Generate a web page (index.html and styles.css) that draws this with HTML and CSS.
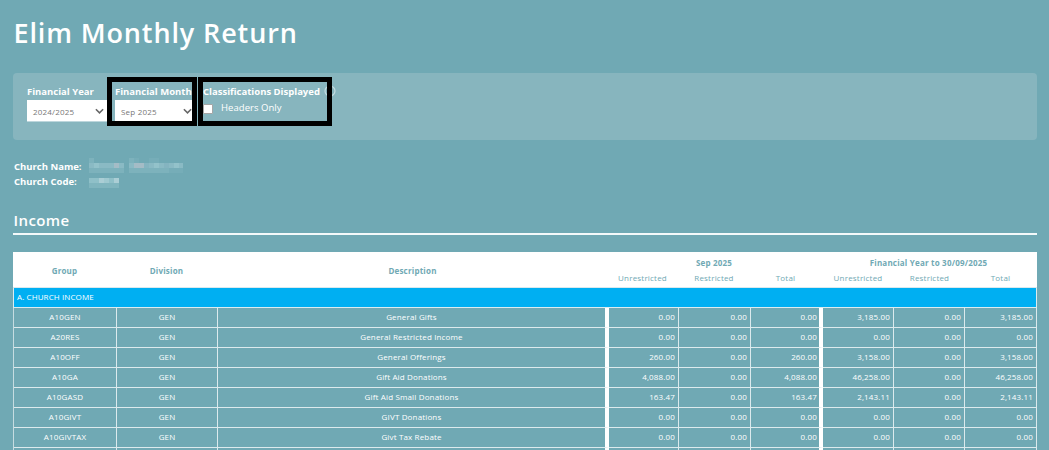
FILE: index.html
```html
<!DOCTYPE html>
<html lang="en">
<head>
<meta charset="utf-8">
<title>Elim Monthly Return</title>
<link rel="stylesheet" href="styles.css">
</head>
<body>
<main class="page">
  <h1 class="title">Elim Monthly Return</h1>
  <section class="filters">
    <div class="field">
      <div class="label">Financial Year</div>
      <div class="select"><span>2024/2025</span><svg class="chevron" viewBox="0 0 8 6"><path d="M0.8 1 L4 4.2 L7.2 1"/></svg></div>
    </div>
    <div class="field">
      <div class="label">Financial Month</div>
      <div class="select"><span>Sep 2025</span><svg class="chevron" viewBox="0 0 8 6"><path d="M0.8 1 L4 4.2 L7.2 1"/></svg></div>
    </div>
    <div class="field field-wide">
      <div class="label label-info"><span>Classifications Displayed</span><svg class="info" viewBox="0 0 12 12"><circle cx="6" cy="6" r="5"/></svg></div>
      <div class="check"><span class="box"></span><span class="check-text">Headers Only</span></div>
    </div>
    <div class="mark mark-month"></div>
    <div class="mark mark-class"></div>
  </section>
  <section class="church">
    <div class="church-row"><span class="church-key church-name">Church Name:</span>
      <svg class="mosaic" width="95" height="15" viewBox="0 0 95 15" shape-rendering="crispEdges">
        <path fill="#7db2bc" d="M0 0h5v5h-5zM40 0h5v5h-5zM0 10h35v5h-35zM40 10h40v5h-40z"/>
        <path fill="#76adb8" d="M45 0h5v5h-5zM60 0h10v5h-10zM80 10h14v5h-14z"/>
        <path fill="#8abac4" d="M0 5h35v5h-35zM40 5h15v5h-15zM60 5h34v5h-34z"/>
        <path fill="#93c2ca" d="M5 5h5v5h-5zM65 5h5v5h-5zM85 5h5v5h-5z"/>
        <path fill="#a4bcc6" d="M25 5h5v5h-5zM45 5h10v5h-10z"/>
        <path fill="#84b4c0" d="M55 5h5v5h-5zM75 5h5v5h-5z"/>
      </svg>
    </div>
    <div class="church-row"><span class="church-key church-code">Church Code:</span>
      <svg class="mosaic mosaic-code" width="30" height="10" viewBox="0 0 30 10" shape-rendering="crispEdges">
        <path fill="#8fc0c8" d="M0 0h30v5h-30z"/>
        <path fill="#abced5" d="M10 0h5v5h-5zM25 0h5v5h-5z"/>
        <path fill="#9fc9d0" d="M15 0h5v5h-5z"/>
        <path fill="#80b5be" d="M0 5h30v5h-30z"/>
      </svg>
    </div>
  </section>
  <h2 class="heading">Income</h2>
  <section class="table">
    <div class="thead">
      <div class="h h-group">Group</div><div class="h">Division</div><div class="h">Description</div>
      <div class="period"><div class="h period-name">Sep 2025</div><div class="subs subs-month"><span>Unrestricted</span><span>Restricted</span><span>Total</span></div></div>
      <div class="period"><div class="h period-name">Financial Year to 30/09/2025</div><div class="subs subs-year"><span>Unrestricted</span><span>Restricted</span><span>Total</span></div></div>
    </div>
    <div class="band">A. CHURCH INCOME</div>
    <div class="row"><div>A10GEN</div><div>GEN</div><div>General Gifts</div><div>0.00</div><div>0.00</div><div>0.00</div><div>3,185.00</div><div>0.00</div><div>3,185.00</div></div>
    <div class="row"><div>A20RES</div><div>GEN</div><div>General Restricted Income</div><div>0.00</div><div>0.00</div><div>0.00</div><div>0.00</div><div>0.00</div><div>0.00</div></div>
    <div class="row"><div>A10OFF</div><div>GEN</div><div>General Offerings</div><div>260.00</div><div>0.00</div><div>260.00</div><div>3,158.00</div><div>0.00</div><div>3,158.00</div></div>
    <div class="row"><div>A10GA</div><div>GEN</div><div>Gift Aid Donations</div><div>4,088.00</div><div>0.00</div><div>4,088.00</div><div>46,258.00</div><div>0.00</div><div>46,258.00</div></div>
    <div class="row"><div>A10GASD</div><div>GEN</div><div>Gift Aid Small Donations</div><div>163.47</div><div>0.00</div><div>163.47</div><div>2,143.11</div><div>0.00</div><div>2,143.11</div></div>
    <div class="row"><div>A10GIVT</div><div>GEN</div><div>GIVT Donations</div><div>0.00</div><div>0.00</div><div>0.00</div><div>0.00</div><div>0.00</div><div>0.00</div></div>
    <div class="row"><div>A10GIVTAX</div><div>GEN</div><div>Givt Tax Rebate</div><div>0.00</div><div>0.00</div><div>0.00</div><div>0.00</div><div>0.00</div><div>0.00</div></div>
    <div class="row"><div></div><div></div><div></div><div></div><div></div><div></div><div></div><div></div><div></div></div>
  </section>
</main>
</body>
</html>
```
FILE: styles.css
```css
* { box-sizing: border-box; }
body { margin: 0; background: #70a9b4; color: #fff; font-family: "Open Sans", "Noto Sans", sans-serif; }
.page { height: 450px; overflow: hidden; padding: 13px 12px 0 13px; }
.title { margin: 0; height: 60px; padding-left: 0.5px; font-size: 27px; line-height: 40px; font-weight: 600; letter-spacing: 0.87px; }
.filters { position: relative; display: flex; height: 67px; padding: 11px 14px 0; background: #87b5be; border-radius: 4px; }
.field { width: 88px; }
.field-wide { width: 150px; }
.label { height: 16px; font-size: 9.5px; line-height: 15px; font-weight: 700; white-space: nowrap; }
.label-info { display: flex; align-items: center; gap: 4px; padding-bottom: 2px; }
.info { width: 12px; height: 12px; fill: none; stroke: #c4dce1; stroke-width: 1.2; }
.select { display: flex; align-items: center; justify-content: space-between; width: 80px; height: 22px; padding: 1px 3px 0 6px; background: #fff; border-bottom: 1px solid #bdd6dc; color: #777; font-size: 8px; letter-spacing: 0.2px; }
.chevron { width: 9px; height: 7px; fill: none; stroke: #666; stroke-width: 1.4; }
.check { display: flex; align-items: center; height: 16px; }
.box { width: 10px; height: 10px; margin: 2px 8px 0 0; background: #fff; border: 1px solid #a5a5a5; border-radius: 1px; }
.check-text { margin-top: -1px; font-size: 9.5px; line-height: 14px; letter-spacing: 0.05px; }
.mark { position: absolute; top: 4px; height: 49px; border: 5px solid #000; }
.mark-month { left: 94px; width: 90px; }
.mark-class { left: 185px; width: 134px; }
.church { height: 70px; padding: 18px 0 0 1px; }
.church-row { display: flex; height: 15px; font-size: 9.5px; line-height: 17px; font-weight: 700; }
.church-key { width: 75px; white-space: nowrap; }
.mosaic { margin-top: 0; }
.mosaic-code { margin-top: 5px; }
.heading { height: 25px; margin: 0; padding-left: 0.5px; border-bottom: 2px solid #f4f9fa; font-size: 15px; line-height: 20px; font-weight: 600; letter-spacing: 0.4px; }
.table { margin-top: 17px; font-size: 8px; }
.thead { display: grid; grid-template-columns: 103px 101px 391px 212px 217px; height: 36px; background: #fff; color: #70a9b4; border-bottom: 1px solid #d9e9ee; text-align: center; line-height: 37px; }
.h { font-weight: 700; letter-spacing: 0.2px; }
.period { padding-top: 4px; line-height: 13px; }
.period-name { height: 12px; }
.subs { display: grid; margin-top: 3px; letter-spacing: 0.2px; }
.subs-month { grid-template-columns: 69px 74px 69px; }
.subs-year { grid-template-columns: 76px 67px 75px; }
.band { height: 20px; padding-left: 3px; border: 1px solid #dcecf0; border-top: 0; background: #00aff2; line-height: 18px; letter-spacing: 0.1px; }
.row { display: grid; grid-template-columns: 103px 101px 391px 70px 72px 72px 71px 71px 72px; height: 20px; border-left: 1px solid #c5dce1; line-height: 18px; text-align: center; }
.row > div { height: 20px; border-right: 1px solid #dceaed; border-bottom: 1px solid #dceaed; white-space: nowrap; letter-spacing: 0.15px; }
.row > div:nth-child(3), .row > div:nth-child(6) { border-right: 4px solid #fff; }
.row > div:nth-child(n+4) { padding-right: 3px; text-align: right; }
.row > div:nth-child(6) { padding-right: 2px; }
```
